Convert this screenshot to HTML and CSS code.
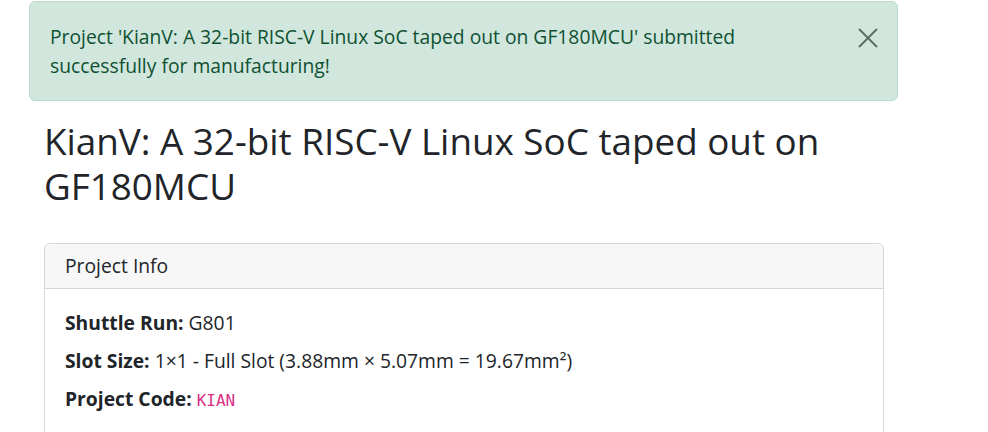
FILE: index.html
```html
<!DOCTYPE html>
<html lang="en">
<head>
<meta charset="utf-8">
<title>Project submitted</title>
<link rel="stylesheet" href="styles.css">
</head>
<body>
<div class="alert">
  <div class="alert-text">Project 'KianV: A 32-bit RISC-V Linux SoC taped out on GF180MCU' submitted successfully for manufacturing!</div>
  <button class="close" aria-label="Close">
    <svg width="20" height="20" viewBox="0 0 20 20"><path d="M1 1 L19 19 M19 1 L1 19" stroke="currentColor" stroke-width="2" fill="none"/></svg>
  </button>
</div>
<main class="content">
  <h1 class="title">KianV: A 32-bit RISC-V Linux SoC taped out on GF180MCU</h1>
  <section class="card">
    <div class="card-header">Project Info</div>
    <div class="card-body">
      <p class="row"><strong>Shuttle Run:</strong> G801</p>
      <p class="row"><strong>Slot Size:</strong> 1×1 - Full Slot (3.88mm × 5.07mm = 19.67mm²)</p>
      <p class="row"><strong>Project Code:</strong> <code class="code">KIAN</code></p>
    </div>
  </section>
</main>
</body>
</html>
```

FILE: styles.css
```css
html, body {
  margin: 0;
  padding: 0;
  background: #ffffff;
}
body {
  font-family: "Open Sans", "Noto Sans", sans-serif;
  color: #212529;
  font-size: 19.3px;
  line-height: 1.5;
}
.alert {
  position: relative;
  margin: 1px 90px 0 29px;
  width: 869px;
  box-sizing: border-box;
  background: #d1e7dd;
  border: 1px solid #badbcc;
  border-radius: 6px;
  color: #0f5132;
  padding: 20px 100px 20px 20px;
  font-size: 19.3px;
  line-height: 29px;
}
.close {
  position: absolute;
  top: 26px;
  right: 19px;
  width: 20px;
  height: 20px;
  padding: 0;
  border: 0;
  background: transparent;
  color: #5e6c66;
  cursor: pointer;
  display: flex;
}
.content {
  padding: 0 104px 0 44px;
}
.title {
  margin: 18px 0 0 0;
  font-size: 36.8px;
  font-weight: 400;
  line-height: 45px;
  color: #212529;
}
.card {
  margin-top: 34px;
  border: 1px solid #d6d6d6;
  border-radius: 6px;
  height: 200px;
}
.card-header {
  background: #f7f7f7;
  border-bottom: 1px solid #d6d6d6;
  border-radius: 6px 6px 0 0;
  padding: 8px 20px;
  line-height: 28px;
  font-size: 19.3px;
}
.card-body {
  padding: 20px 20px;
}
.row {
  margin: 0 0 10px 0;
  line-height: 28px;
}
.code {
  font-family: "DejaVu Sans Mono", "Liberation Mono", monospace;
  color: #d63384;
  font-size: 16px;
}
```
